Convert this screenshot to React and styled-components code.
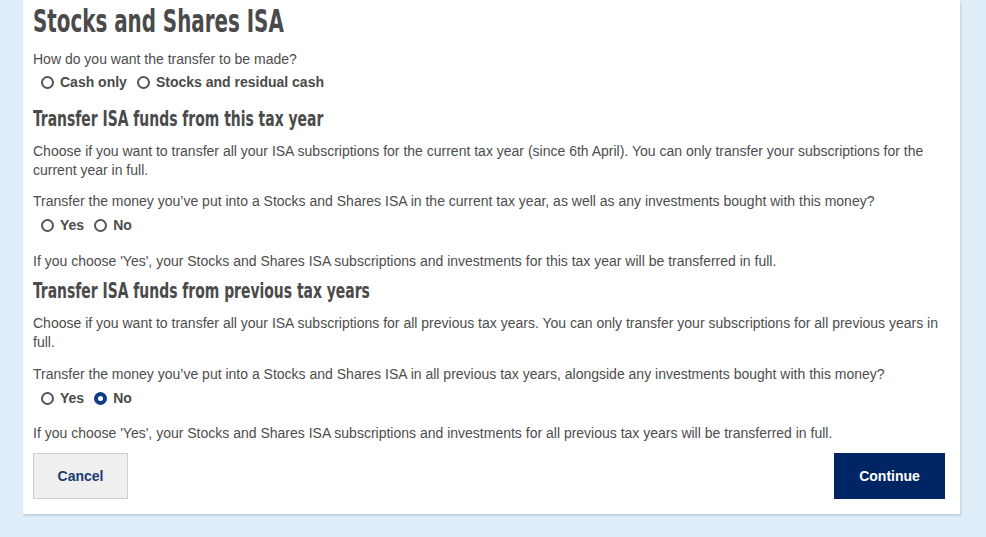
import React from "react";
import styled, { createGlobalStyle } from "styled-components";

const Global = createGlobalStyle`
  html, body { margin: 0; padding: 0; background: #dfeef8; }
  body { font-family: "Liberation Sans", Arial, sans-serif; overflow: hidden; }
`;

const Page = styled.div`
  width: 986px;
  height: 537px;
  background: #dfeef8;
`;

const Card = styled.main`
  margin-left: 23px;
  width: 937px;
  box-sizing: border-box;
  background: #fff;
  padding: 4px 15px 15px 10px;
  box-shadow: 1px 2px 2px rgba(150, 170, 185, 0.45);
`;

const Title = styled.h1`
  font-family: "DejaVu Sans Condensed", "DejaVu Sans", sans-serif;
  font-stretch: condensed;
  font-weight: 700;
  font-size: 32px;
  line-height: 34px;
  color: #4a4a4a;
  margin: 0 0 12px 0;
  transform: scaleX(0.69);
  transform-origin: left center;
  white-space: nowrap;
`;

const SubTitle = styled.h2`
  font-family: "DejaVu Sans Condensed", "DejaVu Sans", sans-serif;
  font-stretch: condensed;
  font-weight: 700;
  font-size: 21px;
  line-height: 24px;
  color: #4a4a4a;
  margin: ${(p) => p.$top || 0}px 0 ${(p) => p.$bottom ?? 11}px 0;
  transform: scaleX(0.737);
  transform-origin: left center;
  white-space: nowrap;
`;

const Text = styled.p`
  font-size: 14px;
  line-height: 19px;
  color: #4d4d4d;
  margin: 0 0 ${(p) => p.$bottom ?? 12}px 0;
`;

const RadioRow = styled.div`
  display: flex;
  align-items: center;
  gap: 10px;
  padding-left: 8px;
  height: 20px;
  margin-bottom: ${(p) => p.$bottom ?? 16}px;
`;

const RadioLabel = styled.label`
  display: flex;
  align-items: center;
  gap: 6px;
  font-size: 14px;
  font-weight: 700;
  color: #4a4a4a;
`;

const Circle = styled.span`
  width: 13px;
  height: 13px;
  box-sizing: border-box;
  border-radius: 50%;
  border: ${(p) => (p.$checked ? "4px solid #103d86" : "2px solid #555")};
  background: #fff;
`;

const Actions = styled.div`
  display: flex;
  justify-content: space-between;
  margin-top: 10px;
`;

const Button = styled.button`
  font-family: "Liberation Sans", Arial, sans-serif;
  font-size: 14px;
  font-weight: 700;
  height: 46px;
  cursor: pointer;
  border: ${(p) => (p.$primary ? "none" : "1px solid #cfcfcf")};
  background: ${(p) => (p.$primary ? "#002564" : "#efefef")};
  color: ${(p) => (p.$primary ? "#fff" : "#1b3c72")};
  width: ${(p) => p.$w}px;
`;

const Radio = ({ label, checked }) => (
  <RadioLabel>
    <Circle $checked={checked} />
    {label}
  </RadioLabel>
);

export default function App() {
  return (
    <Page>
      <Global />
      <Card>
        <Title>Stocks and Shares ISA</Title>
        <Text $bottom={3}>How do you want the transfer to be made?</Text>
        <RadioRow $bottom={15}>
          <Radio label="Cash only" />
          <Radio label="Stocks and residual cash" />
        </RadioRow>
        <SubTitle>Transfer ISA funds from this tax year</SubTitle>
        <Text>
          Choose if you want to transfer all your ISA subscriptions for the current tax year (since 6th April). You can only transfer your subscriptions for the current year in full.
        </Text>
        <Text $bottom={4}>
          Transfer the money you’ve put into a Stocks and Shares ISA in the current tax year, as well as any investments bought with this money?
        </Text>
        <RadioRow $bottom={17}>
          <Radio label="Yes" />
          <Radio label="No" />
        </RadioRow>
        <Text $bottom={0}>
          If you choose 'Yes', your Stocks and Shares ISA subscriptions and investments for this tax year will be transferred in full.
        </Text>
        <SubTitle $top={8}>Transfer ISA funds from previous tax years</SubTitle>
        <Text $bottom={13}>
          Choose if you want to transfer all your ISA subscriptions for all previous tax years. You can only transfer your subscriptions for all previous years in full.
        </Text>
        <Text $bottom={4}>
          Transfer the money you’ve put into a Stocks and Shares ISA in all previous tax years, alongside any investments bought with this money?
        </Text>
        <RadioRow>
          <Radio label="Yes" />
          <Radio label="No" checked />
        </RadioRow>
        <Text $bottom={0}>
          If you choose 'Yes', your Stocks and Shares ISA subscriptions and investments for all previous tax years will be transferred in full.
        </Text>
        <Actions>
          <Button $w={95}>Cancel</Button>
          <Button $primary $w={111}>Continue</Button>
        </Actions>
      </Card>
    </Page>
  );
}
